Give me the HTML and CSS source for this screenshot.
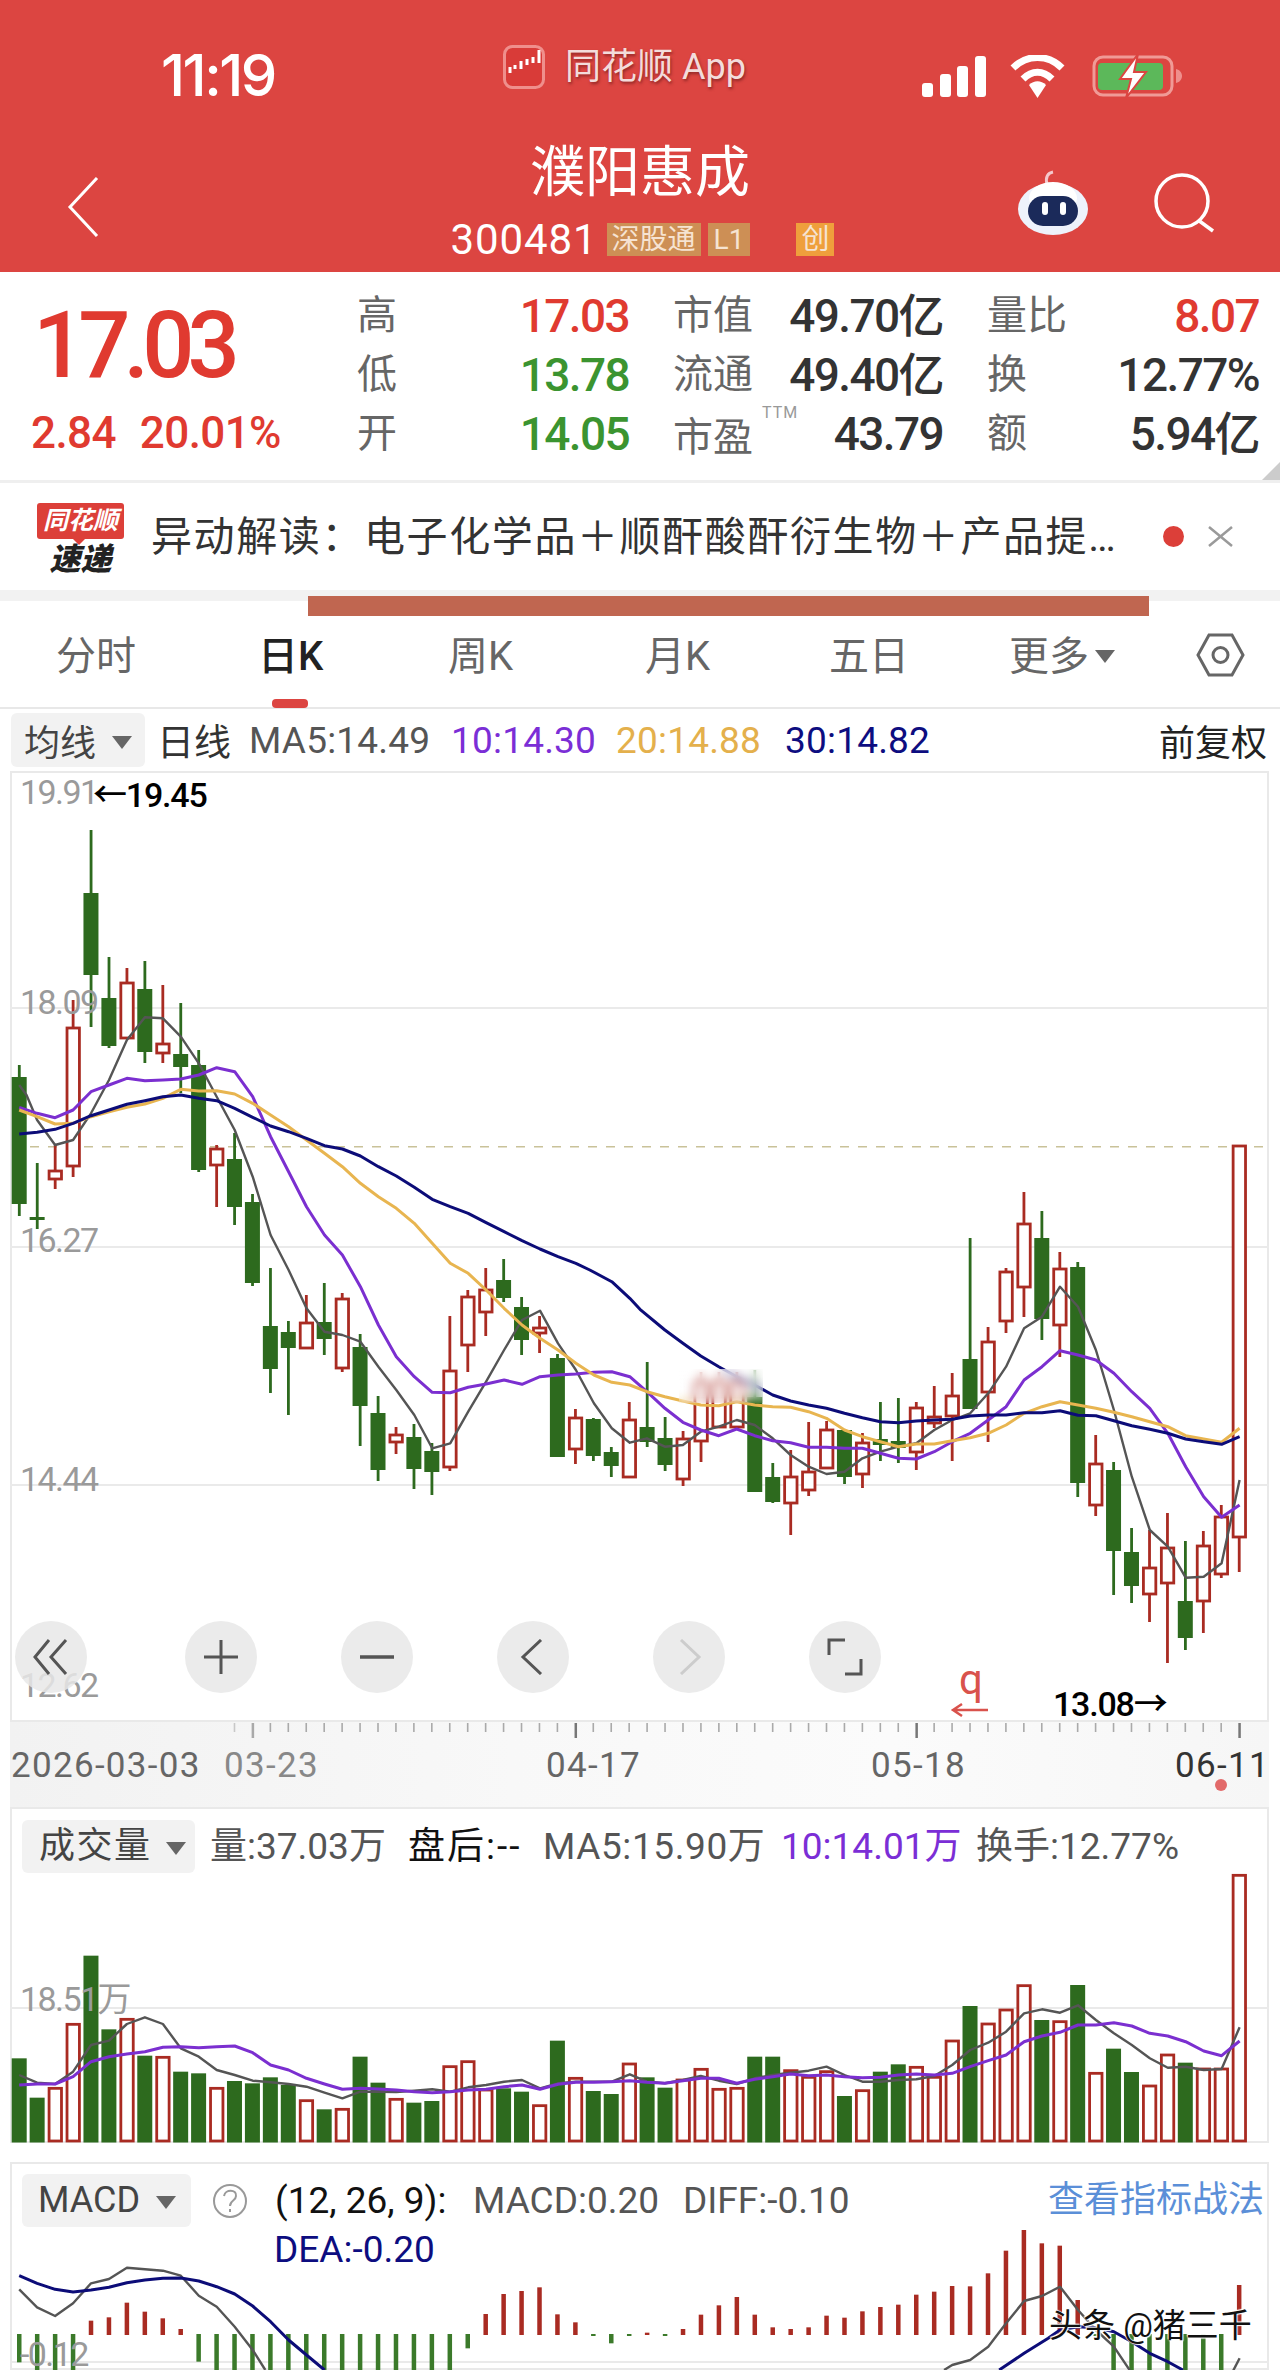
FILE: index.html
```html
<!DOCTYPE html>
<html lang="zh-CN">
<head>
  <meta charset="UTF-8" />
  <title>濮阳惠成 300481</title>
  <link rel="stylesheet" href="styles.css">
</head>
<body>
  <div class="phone">
    <header class="topbar">
      <div class="status">
        <span class="clock">11:19</span>
        <div class="carrier">
          <svg class="app-icon" viewBox="0 0 42 44">
            <rect x="1.5" y="1.5" width="39" height="41" rx="8" fill="#d93b38" stroke="#ef8f8c" stroke-width="3"/>
            <path d="M7 22v6M12 20v4M18 16v8M24 14v6M30 12v6M36 5v13" stroke="#fff" stroke-width="3" fill="none"/>
          </svg>
          <span>同花顺 App</span>
        </div>
        <div class="status-icons">
          <svg width="64" height="41" viewBox="0 0 64 41">
            <rect x="0" y="27" width="11" height="14" rx="3" fill="#fff"/>
            <rect x="18" y="18" width="11" height="23" rx="3" fill="#fff"/>
            <rect x="35" y="10" width="11" height="31" rx="3" fill="#fff"/>
            <rect x="53" y="0" width="11" height="41" rx="3" fill="#fff"/>
          </svg>
          <svg width="55" height="43" viewBox="0 0 55 43">
            <path d="M3 13C17 -1 38 -1 52 13" stroke="#fff" stroke-width="7" fill="none"/>
            <path d="M13 24C22 15 33 15 42 24" stroke="#fff" stroke-width="7" fill="none"/>
            <path d="M19 30C24 25 31 25 36 30L27.5 43Z" fill="#fff"/>
          </svg>
          <svg width="90" height="44" viewBox="0 0 90 44">
            <rect x="2" y="3" width="78" height="38" rx="9" fill="none" stroke="#f09a96" stroke-width="3"/>
            <rect x="6" y="9" width="65" height="27" rx="4" fill="#5cb85a"/>
            <path d="M84 15c4 1 6 4 6 7s-2 6-6 7z" fill="#ef8f8c"/>
            <path d="M46 0L28 25H39L34 44L54 18H42Z" fill="#fff" stroke="#dc4541" stroke-width="2"/>
          </svg>
        </div>
      </div>
      <div class="nav">
        <svg class="back" width="34" height="60" viewBox="0 0 34 60"><path d="M31 1L4 30L31 59" fill="none" stroke="#fff" stroke-width="3"/></svg>
        <div class="stock-title">
          <h1>濮阳惠成</h1>
          <div class="stock-code">
            <span class="code">300481</span>
            <span class="tag tag-first">深股通</span>
            <span class="tag">L1</span>
            <span class="tag tag-chuang">创</span>
          </div>
        </div>
        <div class="nav-actions">
          <svg class="robot" width="72" height="66" viewBox="0 0 72 66">
            <path d="M30 14C28 7 31 3 36 2" fill="none" stroke="#f4c8cc" stroke-width="3"/>
            <ellipse cx="36" cy="39" rx="35" ry="26" fill="#eef2fb"/>
            <ellipse cx="36" cy="28" rx="24" ry="16" fill="#fff"/>
            <rect x="11" y="26" width="50" height="30" rx="15" fill="#1b2a5a"/>
            <rect x="25" y="32" width="6" height="13" rx="3" fill="#fff"/>
            <rect x="43" y="32" width="6" height="13" rx="3" fill="#fff"/>
          </svg>
          <svg width="62" height="60" viewBox="0 0 62 60">
            <circle cx="29" cy="28" r="26" fill="none" stroke="#fff" stroke-width="3.5"/>
            <path d="M45 47L60 58" stroke="#fff" stroke-width="3.5"/>
          </svg>
        </div>
      </div>
    </header>

    <section class="quote">
      <div class="price">
        <div class="last">17.03</div>
        <div class="change"><span>2.84</span><span>20.01%</span></div>
      </div>
      <div class="stats">
        <div class="stat"><span class="k">高</span><span class="v up">17.03</span></div>
        <div class="stat"><span class="k">市值</span><span class="v">49.70亿</span></div>
        <div class="stat"><span class="k">量比</span><span class="v up">8.07</span></div>
        <div class="stat"><span class="k">低</span><span class="v down">13.78</span></div>
        <div class="stat"><span class="k">流通</span><span class="v">49.40亿</span></div>
        <div class="stat"><span class="k">换</span><span class="v">12.77%</span></div>
        <div class="stat"><span class="k">开</span><span class="v down">14.05</span></div>
        <div class="stat"><span class="k k-low">市盈<sup class="ttm">TTM</sup></span><span class="v">43.79</span></div>
        <div class="stat"><span class="k">额</span><span class="v">5.94亿</span></div>
      </div>
      <div class="corner"></div>
    </section>

    <section class="news">
      <div class="news-logo">
        <div class="bubble">同花顺</div>
        <div class="express">速递</div>
      </div>
      <p class="news-text">异动解读：电子化学品＋顺酐酸酐衍生物＋产品提…</p>
      <span class="news-dot"></span>
      <svg width="25" height="21" viewBox="0 0 25 21"><path d="M1 1L24 20M24 1L1 20" stroke="#9a9a9a" stroke-width="2.5"/></svg>
    </section>

    <div class="band"><div class="redact"></div></div>

    <nav class="tabs">
      <span class="tab tab-1">分时</span>
      <span class="tab tab-active">日K</span>
      <span class="tab tab-3">周K</span>
      <span class="tab tab-4">月K</span>
      <span class="tab tab-5">五日</span>
      <span class="tab tab-6">更多<i class="caret"></i></span>
      <svg class="hex" width="49" height="44" viewBox="0 0 49 44">
        <path d="M13 2H36L47 22L36 42H13L2 22Z" fill="none" stroke="#666" stroke-width="3"/>
        <circle cx="24.5" cy="22" r="7.5" fill="none" stroke="#666" stroke-width="3"/>
      </svg>
    </nav>

    <div class="ma-row">
      <span class="pill pill-ma">均线<i class="caret"></i></span>
      <span class="ma-day">日线</span>
      <span class="gray ma5">MA5:14.49</span>
      <span class="violet ma10">10:14.30</span>
      <span class="amber ma20">20:14.88</span>
      <span class="navy ma30">30:14.82</span>
      <span class="adjust">前复权</span>
    </div>

    <section class="panel kline">
      <svg id="klineChart" class="chart" viewBox="10 771 1259 951"></svg>
      <div class="smear"></div>
      <span class="axis a1">19.91</span>
      <span class="axis a2">18.09</span>
      <span class="axis a3">16.27</span>
      <span class="axis a4">14.44</span>
      <span class="axis a5">12.62</span>
      <span class="mark mark-high">←19.45</span>
      <span class="mark mark-low">13.08→</span>
      <span class="q-mark">q</span>
      <div class="zoom-btns">
        <span class="zbtn"><svg width="36" height="36" viewBox="0 0 36 36"><path d="M16 1L2 18L16 35M33 1L18 18L33 35" fill="none" stroke="#555" stroke-width="3"/></svg></span>
        <span class="zbtn"><svg width="36" height="36" viewBox="0 0 36 36"><path d="M18 1V35M1 18H35" stroke="#555" stroke-width="3"/></svg></span>
        <span class="zbtn"><svg width="36" height="36" viewBox="0 0 36 36"><path d="M1 18H35" stroke="#555" stroke-width="3.5"/></svg></span>
        <span class="zbtn"><svg width="36" height="36" viewBox="0 0 36 36"><path d="M26 1L8 18L26 35" fill="none" stroke="#555" stroke-width="3"/></svg></span>
        <span class="zbtn"><svg width="36" height="36" viewBox="0 0 36 36"><path d="M10 1L28 18L10 35" fill="none" stroke="#ccc" stroke-width="3"/></svg></span>
        <span class="zbtn"><svg width="36" height="38" viewBox="0 0 36 38"><path d="M2 17V2H18M34 21V36H18" fill="none" stroke="#555" stroke-width="3"/></svg></span>
      </div>
    </section>

    <section class="time-axis">
      <svg id="timeTicks" class="chart" viewBox="0 1722 1280 85"></svg>
      <span class="date d1">2026-03-03</span>
      <span class="date d2">03-23</span>
      <span class="date d3">04-17</span>
      <span class="date d4">05-18</span>
      <span class="date d5">06-11</span>
      <span class="time-dot"></span>
    </section>

    <section class="panel vol">
      <svg id="volChart" class="chart" viewBox="10 1807 1259 336"></svg>
      <div class="info-row">
        <span class="pill pill-vol">成交量<i class="caret"></i></span>
        <span class="gray v1">量:37.03万</span>
        <span class="dark v2">盘后:--</span>
        <span class="gray v3">MA5:15.90万</span>
        <span class="violet v4">10:14.01万</span>
        <span class="gray v5">换手:12.77%</span>
      </div>
      <span class="axis a-vol">18.51万</span>
    </section>

    <section class="panel macd">
      <svg id="macdChart" class="chart" viewBox="10 2162 1259 208"></svg>
      <div class="info-row">
        <span class="pill pill-macd">MACD<i class="caret"></i></span>
        <svg class="help" width="36" height="36" viewBox="0 0 36 36">
          <circle cx="18" cy="18" r="16" fill="none" stroke="#999" stroke-width="2"/>
          <path d="M12 13c1-7 13-7 12 0c0 5-6 4-6 10M18 26v3" fill="none" stroke="#999" stroke-width="2"/>
        </svg>
        <span class="dark m1">(12, 26, 9):</span>
        <span class="gray m2">MACD:0.20</span>
        <span class="gray m3">DIFF:-0.10</span>
        <span class="link">查看指标战法</span>
      </div>
      <div class="dea navy">DEA:-0.20</div>
      <span class="axis a-macd">-0.12</span>
      <span class="watermark">头条 @猪三千</span>
    </section>
  </div>
  <script src="chart.js"></script>
</body>
</html>
```

FILE: styles.css
```css
* {
  box-sizing: border-box;
}
body {
  margin: 0;
  background: #fff;
  font-family: Roboto, "Noto Sans CJK SC", sans-serif;
}
.phone {
  width: 1280px;
  height: 2370px;
  overflow: hidden;
}

/* red header */
.topbar {
  height: 272px;
  background: #dc4541;
  color: #fff;
}
.status {
  height: 110px;
  display: flex;
  align-items: flex-start;
  padding: 45px 0 0 161px;
}
.clock {
  width: 122px;
  font: 500 58px/60px Inter, sans-serif;
  letter-spacing: -2.5px;
  white-space: nowrap;
}
.carrier {
  width: 248px;
  margin-left: 220px;
  display: flex;
  gap: 20px;
  color: #f3dcdb;
  font-size: 36px;
  line-height: 44px;
  white-space: nowrap;
  text-shadow: 1px 2px 3px rgba(90, 20, 20, .6);
}
.app-icon {
  width: 42px;
  height: 44px;
  flex-shrink: 0;
}
.status-icons {
  margin-left: 171px;
  display: flex;
  align-items: center;
  gap: 24px;
  margin-top: 9px;
}
.status-icons svg + svg + svg {
  margin-left: 3px;
}
.nav {
  display: grid;
  grid-template-columns: 1fr auto 1fr;
  height: 162px;
}
.back {
  margin: 67px 0 0 66px;
}
.stock-title {
  text-align: center;
}
.stock-title h1 {
  margin: 30px 0 0;
  font-size: 55px;
  line-height: 64px;
  font-weight: 400;
}
.stock-code {
  display: flex;
  align-items: center;
  margin: 18px 0 0 5px;
  height: 34px;
}
.code {
  font-size: 42px;
  letter-spacing: .9px;
}
.tag {
  margin-left: 7px;
  height: 33px;
  padding: 0 6px;
  background: #cd8f55;
  color: #f6e3d2;
  font-size: 28px;
  line-height: 33px;
}
.tag-first {
  margin-left: 9px;
  padding: 0 5px;
}
.tag-chuang {
  margin-left: 46px;
  background: #ef9f3c;
  padding: 0 5px;
}
.nav-actions {
  display: flex;
  justify-content: flex-end;
  align-items: center;
  gap: 64px;
  padding: 0 65px 0 0;
  margin-top: 28px;
  height: 130px;
}

/* quote block */
.quote {
  position: relative;
  height: 208px;
  display: flex;
}
.price {
  width: 357px;
  color: #e03a30;
  padding: 24px 0 0 31px;
}
.last {
  font-size: 92px;
  line-height: 100px;
  letter-spacing: -7px;
  font-weight: 500;
  margin-left: 2px;
}
.change {
  display: flex;
  gap: 24px;
  margin-top: 13px;
  font-size: 44px;
  line-height: 48px;
  letter-spacing: -.6px;
  font-weight: 500;
}
.stats {
  display: grid;
  grid-template-columns: 272px 270px 272px;
  column-gap: 44px;
  grid-auto-rows: 59px;
  padding-top: 14px;
}
.stat {
  display: flex;
  justify-content: space-between;
  align-items: center;
}
.k {
  color: #666;
  font-size: 40px;
  line-height: 52px;
}
.k-low {
  padding-top: 8px;
  position: relative;
}
.ttm {
  position: absolute;
  left: 89px;
  top: 0;
  font-size: 16px;
  line-height: 18px;
  letter-spacing: 1px;
  color: #999;
}
.v {
  color: #333;
  font-size: 46px;
  line-height: 52px;
  font-weight: 500;
  letter-spacing: -1.6px;
}
.up {
  color: #e03a30;
}
.down {
  color: #3b9430;
}
.corner {
  position: absolute;
  right: 0;
  bottom: 0;
  border-left: 18px solid transparent;
  border-bottom: 18px solid #ccc;
}

/* news strip */
.news {
  height: 110px;
  border-top: 3px solid #efefef;
  display: flex;
  align-items: center;
  padding-left: 37px;
}
.news-logo {
  width: 87px;
  height: 71px;
  margin-top: 3px;
}
.bubble {
  position: relative;
  height: 36px;
  background: #dc3f39;
  border-radius: 3px;
  color: #fff;
  font-size: 25px;
  line-height: 36px;
  font-weight: 700;
  font-style: italic;
  text-align: center;
}
.bubble::after {
  content: "";
  position: absolute;
  left: 36px;
  bottom: -6px;
  border: 6px solid transparent;
  border-bottom: 0;
  border-top-color: #dc3f39;
}
.express {
  margin-top: 6px;
  color: #222;
  font-size: 31px;
  line-height: 30px;
  font-weight: 900;
  font-style: italic;
  text-align: center;
}
.news-text {
  width: 1012px;
  margin: 0 0 0 27px;
  color: #333;
  font-size: 41px;
  letter-spacing: 1.6px;
  line-height: 50px;
  white-space: nowrap;
}
.news-dot {
  width: 21px;
  height: 21px;
  border-radius: 50%;
  background: #dc3f39;
  margin-right: 24px;
}

.band {
  position: relative;
  height: 11px;
  background: #f2f2f2;
}
.redact {
  position: absolute;
  left: 308px;
  top: 6px;
  width: 841px;
  height: 20px;
  background: #c06650;
}

/* period tabs */
.tabs {
  position: relative;
  height: 108px;
  border-bottom: 2px solid #e8e8e8;
  color: #666;
  font-size: 40px;
}
.tab {
  position: absolute;
  top: 33px;
  line-height: 46px;
}
.tab-1 { left: 56px; }
.tab-active { left: 258px; color: #222; font-weight: 500; }
.tab-active::after {
  content: "";
  position: absolute;
  left: 14px;
  top: 65px;
  width: 36px;
  height: 9px;
  border-radius: 4px;
  background: #dc4541;
}
.tab-3 { left: 448px; }
.tab-4 { left: 645px; }
.tab-5 { left: 829px; }
.tab-6 { left: 1009px; }
.hex {
  position: absolute;
  left: 1196px;
  top: 32px;
}
.caret {
  display: inline-block;
  border: 10px solid transparent;
  border-bottom: 0;
  border-top: 13px solid #666;
  margin-left: 6px;
  vertical-align: 7px;
}

/* MA legend */
.ma-row {
  position: relative;
  height: 62px;
  font-size: 37px;
  display: flex;
  align-items: center;
}
.pill {
  background: #f2f2f2;
  border-radius: 6px;
  color: #444;
  display: flex;
  align-items: center;
  font-size: 36px;
}
.pill-ma {
  width: 134px;
  height: 54px;
  margin-left: 11px;
  padding-left: 13px;
}
.pill-ma .caret,
.pill-vol .caret,
.pill-macd .caret {
  margin-left: 16px;
  margin-top: 4px;
  vertical-align: baseline;
}
.ma-day {
  margin-left: 12px;
  color: #333;
}
.ma5 { margin-left: 18px; width: 202px; letter-spacing: .2px; }
.ma10 { width: 165px; letter-spacing: .2px; }
.ma20 { width: 169px; letter-spacing: .2px; }
.ma30 { letter-spacing: .2px; }
.adjust {
  margin-left: auto;
  padding-right: 13px;
  color: #222;
  font-size: 36px;
}
.gray { color: #555; }
.dark { color: #111; }
.violet { color: #7b2ed6; }
.amber { color: #e4b04c; }
.navy { color: #0d0d80; }

/* chart panels */
.panel {
  position: relative;
  width: 1259px;
  margin-left: 10px;
  box-shadow: inset 0 0 0 2px #e9e9e9;
}
.chart {
  position: absolute;
  left: 0;
  top: 0;
  width: 100%;
  height: 100%;
}
.kline {
  height: 951px;
}
.axis {
  position: absolute;
  left: 10px;
  color: #9a9a9a;
  font-size: 34px;
  line-height: 34px;
  letter-spacing: -1.6px;
}
.a1 { top: 4px; }
.a2 { top: 214px; }
.a3 { top: 452px; }
.a4 { top: 691px; }
.a5 { top: 897px; }
.mark {
  position: absolute;
  color: #000;
  font-size: 34px;
  line-height: 34px;
  font-weight: 500;
  letter-spacing: -1.2px;
}
.mark-high { left: 83px; top: 7px; }
.mark-low { left: 1043px; top: 916px; }
.q-mark {
  position: absolute;
  left: 949px;
  top: 888px;
  color: #d9524c;
  font-size: 42px;
  line-height: 42px;
}
.smear {
  position: absolute;
  left: 669px;
  top: 598px;
  width: 84px;
  height: 34px;
  backdrop-filter: blur(5px);
  background: linear-gradient(rgba(255, 255, 255, .55), rgba(255, 255, 255, .05));
}
.zoom-btns {
  position: absolute;
  left: 5px;
  top: 850px;
  display: flex;
  gap: 84px;
}
.zbtn {
  width: 72px;
  height: 72px;
  border-radius: 50%;
  background: rgba(232, 232, 232, .85);
  display: flex;
  align-items: center;
  justify-content: center;
}
.zbtn:first-child {
  margin-right: 14px;
}

/* time axis */
.time-axis {
  position: relative;
  height: 85px;
  margin-left: 10px;
  width: 1259px;
  background: linear-gradient(90deg, #f2f2f2, #f8f8f8 40%, #fbfbfb 70%, #f6f6f6);
}
.time-axis .chart {
  left: -10px;
  width: 1280px;
}
.date {
  position: absolute;
  top: 26px;
  color: #666;
  font-size: 35px;
  line-height: 36px;
  letter-spacing: 1.3px;
  white-space: nowrap;
}
.d1 { left: 1px; }
.d2 { left: 214px; color: #888; }
.d3 { left: 536px; }
.d4 { left: 861px; }
.d5 { left: 1165px; color: #333; }
.time-dot {
  position: absolute;
  left: 1205px;
  top: 57px;
  width: 12px;
  height: 12px;
  border-radius: 50%;
  background: #e26a6a;
}

.vol {
  height: 336px;
}
.info-row {
  position: relative;
  display: flex;
  align-items: center;
  font-size: 37px;
  line-height: 53px;
  padding: 13px 0 0 12px;
  white-space: nowrap;
}
.pill-vol {
  width: 173px;
  height: 53px;
  padding-left: 17px;
  letter-spacing: 1.5px;
}
.pill-vol .caret { margin-left: 14px; }
.v1 { margin-left: 15px; width: 198px; }
.v2 { width: 135px; letter-spacing: 2px; }
.v3 { width: 238px; letter-spacing: .6px; }
.v4 { width: 195px; }
.a-vol {
  top: 175px;
}

.macd {
  height: 208px;
  margin-top: 19px;
  overflow: hidden;
}
.macd .info-row {
  padding-top: 12px;
}
.pill-macd {
  width: 169px;
  height: 53px;
  padding-left: 16px;
}
.help { margin-left: 21px; }
.m1 { margin-left: 27px; width: 198px; }
.m2 { width: 210px; }
.link {
  margin-left: auto;
  padding-right: 5px;
  font-size: 36px;
  color: #5b8fd8;
}
.dea {
  position: absolute;
  left: 264px;
  top: 67px;
  font-size: 37px;
  line-height: 42px;
}
.a-macd {
  top: 180px;
  line-height: 24px;
}
.watermark {
  position: absolute;
  left: 1039px;
  top: 142px;
  color: #111;
  font-size: 33px;
  line-height: 44px;
  white-space: nowrap;
  text-shadow: 0 0 2px #fff, 1px 1px 1px #fff, -1px -1px 1px #fff;
}
```

FILE: chart.js
```js
// candles: [wick top, body top, body bottom, wick bottom, r/g], y in page px
const candles = [
  [1065,1077,1204,1216,"g"],[1163,1217,1220,1229,"g"],[1145,1171,1179,1189,"r"],[1000,1028,1166,1177,"r"],
  [830,893,975,1027,"g"],[957,998,1046,1048,"g"],[968,983,1038,1038,"r"],[961,989,1052,1063,"g"],
  [985,1044,1053,1063,"r"],[1003,1054,1067,1093,"g"],[1050,1065,1170,1172,"g"],[1145,1149,1165,1207,"r"],
  [1133,1159,1207,1225,"g"],[1194,1202,1283,1286,"g"],[1268,1326,1369,1393,"g"],[1321,1332,1348,1415,"g"],
  [1295,1323,1348,1348,"r"],[1283,1322,1339,1355,"g"],[1293,1299,1368,1372,"r"],[1334,1347,1406,1446,"g"],
  [1396,1413,1470,1481,"g"],[1427,1435,1442,1454,"r"],[1424,1437,1469,1489,"g"],[1443,1451,1472,1495,"g"],
  [1316,1371,1467,1471,"r"],[1290,1297,1345,1372,"r"],[1268,1290,1312,1336,"r"],[1259,1280,1298,1302,"g"],
  [1297,1307,1340,1355,"g"],[1316,1328,1333,1353,"r"],[1354,1358,1457,1457,"g"],[1409,1418,1449,1464,"r"],
  [1418,1419,1456,1461,"g"],[1447,1452,1466,1477,"g"],[1402,1420,1477,1477,"r"],[1362,1427,1442,1447,"g"],
  [1417,1438,1465,1471,"g"],[1431,1439,1479,1486,"r"],[1372,1382,1441,1462,"r"],[1372,1382,1427,1427,"r"],
  [1372,1382,1427,1427,"r"],[1370,1397,1492,1492,"g"],[1463,1477,1502,1503,"g"],[1450,1477,1503,1535,"r"],
  [1422,1472,1490,1496,"r"],[1421,1430,1468,1468,"r"],[1429,1430,1477,1484,"g"],[1433,1443,1474,1488,"r"],
  [1402,1439,1445,1461,"g"],[1398,1441,1448,1463,"g"],[1402,1408,1452,1470,"r"],[1386,1417,1423,1428,"r"],
  [1373,1396,1416,1461,"r"],[1238,1359,1409,1409,"g"],[1327,1342,1392,1442,"r"],[1268,1272,1321,1333,"r"],
  [1192,1224,1287,1317,"r"],[1211,1238,1319,1340,"g"],[1252,1269,1325,1357,"r"],[1262,1267,1483,1497,"g"],
  [1435,1464,1505,1516,"r"],[1462,1470,1551,1595,"g"],[1528,1552,1586,1603,"g"],[1530,1568,1594,1622,"r"],
  [1513,1548,1583,1663,"r"],[1541,1601,1638,1650,"g"],[1531,1546,1601,1633,"r"],[1505,1517,1574,1578,"r"],
  [1146,1146,1537,1572,"r"]
];

// volume bar tops: [zoomed y, zoomed y...] read off the reference, y = 1770 + v / 3
const volTops = [865,983,955,763,557,778,748,857,862,905,910,955,933,940,922,945,992,1018,1018,860,
  938,988,998,993,890,875,960,955,965,1007,812,925,963,972,882,922,953,930,898,958,955,860,860,902,
  922,905,978,962,905,883,892,922,813,708,762,720,647,750,755,645,910,836,906,948,855,878,897,897,316];

// macd bar tops: y = 2150 + v / 3, 555 is the zero line, larger means green going down
const macdVals = [637,660,660,660,512,502,458,485,505,537,635,660,660,660,660,660,660,660,660,660,
  660,660,660,660,660,595,492,432,423,412,493,517,558,580,558,548,558,537,494,466,441,494,532,537,
  532,497,503,484,471,464,434,425,408,409,370,302,240,280,287,450,558,660,660,660,660,660,660,660,405];

const GREEN = "#2d6a1e", RED = "#a92b22", NS = "http://www.w3.org/2000/svg";
const barX = i => 19.2 + 17.94 * i;

function el(svg, name, attrs) {
  const n = document.createElementNS(NS, name);
  for (const k in attrs) n.setAttribute(k, attrs[k]);
  svg.appendChild(n);
}

// each segment: [x offset, y offset, zoomed points]; zoom crops are 2.45x wide, 3x tall
function line(svg, color, width, segments) {
  const pts = [];
  segments.forEach(([ox, oy, flat]) => {
    for (let i = 0; i < flat.length; i += 2) {
      pts.push((ox + flat[i] / 2.45).toFixed(1) + "," + (oy + flat[i + 1] / 3).toFixed(1));
    }
  });
  el(svg, "polyline", { points: pts.join(" "), fill: "none", stroke: color, "stroke-width": width, "stroke-linejoin": "round" });
}

function hline(svg, y) {
  el(svg, "rect", { x: 10, y: y - 1, width: 1259, height: 2, fill: "#eaeaea" });
}

// main k-line chart
const k = document.getElementById("klineChart");
[1008, 1247, 1485].forEach(y => hline(k, y));
el(k, "line", { x1: 12, x2: 1268, y1: 1146.7, y2: 1146.7, stroke: "#c9c299", "stroke-width": 1.5, "stroke-dasharray": "9 9" });
candles.forEach(([wt, bt, bb, wb, c], i) => {
  const x = barX(i);
  const color = c === "g" ? GREEN : RED;
  if (wt < bt) el(k, "rect", { x: x - 1.3, y: wt, width: 2.8, height: bt - wt, fill: color });
  if (wb > bb) el(k, "rect", { x: x - 1.3, y: bb, width: 2.8, height: wb - bb, fill: color });
  if (c === "g") el(k, "rect", { x: x - 7.5, y: bt, width: 15, height: bb - bt, fill: color });
  else el(k, "rect", { x: x - 6, y: bt, width: 12.4, height: bb - bt, fill: "#fff", stroke: color, "stroke-width": 2.8 });
});

line(k, "#555", 2.4, [
  [0, 770, [47,945,65,975,91,1050,135,1125,179,1110,223,1030,267,930,311,810,355,742,399,745,443,800,487,880,531,980,575,1080,619,1220,663,1395]],
  [0, 1270, [707,0,751,115,795,185,839,195,883,215,927,290,971,360,1015,435,1059,535,1103,520,1147,425,1191,335,1235,240,1279,150,1323,122,1367,220,1411,300,1455,400,1499,475,1543,518]],
  [640, 1270, [17,505,61,530,105,525,149,485,193,470,237,450,281,465,325,505,369,555,413,590,457,612,501,605,545,565,589,545,633,530,677,520,721,480,765,450,809,430,853,370,897,290,941,175,985,140,1029,50,1073,110,1117,240,1161,420,1205,620,1249,780,1293,830,1337,923,1381,920,1425,880,1469,630]]
]);
line(k, "#7b2fd0", 3, [
  [0, 770, [47,1012,91,1030,135,1043,179,1020,223,965,267,945,311,925,355,932,399,930,443,927,487,915,531,893,575,905,619,980,663,1100,707,1205,751,1310,795,1395,839,1455]],
  [0, 1270, [883,50,927,165,971,260,1015,320,1059,367,1103,368,1147,352,1191,342,1235,330,1279,343,1323,320,1367,315,1411,312,1455,307,1499,305,1543,320]],
  [640, 1270, [17,365,61,415,105,457,149,480,193,497,237,477,281,497,325,512,369,518,413,532,457,532,501,535,545,535,589,550,633,565,677,567,721,545,765,515,809,490,853,450,897,410,941,330,985,290,1029,242,1073,255,1117,270,1161,310,1205,365,1249,415,1293,490,1337,590,1381,680,1425,742,1469,705]]
]);
line(k, "#e8b550", 3, [
  [0, 770, [47,1020,91,1040,135,1062,179,1060,223,1040,267,1025,311,1012,355,1002,399,985,443,958,487,963,531,962,575,972,619,1000,663,1035,707,1070,751,1110,795,1150,839,1190,883,1240,927,1280,971,1315,1015,1360,1059,1420,1103,1480]],
  [0, 1270, [1147,10,1191,60,1235,115,1279,165,1323,205,1367,240,1411,280,1455,315,1499,337,1543,345]],
  [640, 1270, [17,365,61,380,105,393,149,405,193,407,237,395,281,405,325,410,369,412,413,425,457,445,501,480,545,500,589,515,633,530,677,522,721,522,765,512,809,503,853,490,897,465,941,430,985,410,1029,395,1073,405,1117,415,1161,427,1205,440,1249,455,1293,470,1337,497,1381,507,1425,517,1469,475]]
]);
line(k, "#0c0c78", 3, [
  [0, 770, [47,1092,91,1087,135,1078,179,1060,223,1037,267,1020,311,1003,355,992,399,980,443,975,487,985,531,992,575,1015,619,1042,663,1068,707,1085,751,1105,795,1127,839,1137,883,1158,927,1190,971,1218,1015,1252,1059,1288,1103,1310,1147,1330,1191,1358,1235,1385,1279,1412,1323,1437,1367,1460,1411,1480]],
  [0, 1270, [1445,0,1499,35,1543,85]],
  [640, 1270, [0,118,61,180,105,220,149,258,193,290,237,320,281,345,325,375,369,393,413,405,457,415,501,430,545,443,589,455,633,458,677,453,721,450,765,448,809,438,853,435,897,435,941,428,985,428,1029,422,1073,436,1117,437,1161,452,1205,467,1249,478,1293,490,1337,507,1381,515,1425,523,1469,500]]
]);
// small red arrow beside the q mark
el(k, "path", { d: "M988 1710H954M962 1704L953 1710L962 1716", fill: "none", stroke: "#d9524c", "stroke-width": 2.5 });

// time axis ticks
const t = document.getElementById("timeTicks");
candles.forEach((c, i) => {
  if (i < 12) return;
  const long = [13, 31, 50, 68].includes(i);
  el(t, "rect", { x: barX(i) - 0.8, y: 1723, width: long ? 2.5 : 1.6, height: long ? 15 : 9, fill: long ? "#777" : "#aaa", opacity: i < 14 ? .6 : 1 });
});

// volume chart
const v = document.getElementById("volChart");
hline(v, 2008);
volTops.forEach((top, i) => {
  const y = 1770 + top / 3, x = barX(i);
  if (candles[i][4] === "g") el(v, "rect", { x: x - 7.5, y: y, width: 15, height: 2142.5 - y, fill: GREEN });
  else el(v, "rect", { x: x - 6, y: y, width: 12.4, height: 2141 - y, fill: "#fff", stroke: RED, "stroke-width": 2.8 });
});
line(v, "#555", 2.4, [
  [0, 1770, [47,915,91,938,135,942,179,905,223,825,267,812,311,762,355,742,399,762,443,835,487,860,531,900,575,915,619,932,663,937,707,942,751,950,795,968,839,985,883,965,927,965,971,966,1015,962,1059,958,1103,965,1147,952,1191,945,1235,935,1279,930,1323,955,1367,940,1411,935,1455,935,1499,935,1543,913]],
  [640, 1770, [17,935,61,940,105,930,149,918,193,932,237,942,281,925,325,915,369,908,413,902,457,890,501,915,545,935,589,935,633,930,677,928,721,918,765,885,809,840,853,818,897,785,941,730,985,718,1029,728,1073,706,1117,750,1161,790,1205,825,1249,865,1293,893,1337,890,1381,900,1425,897,1469,772]]
]);
line(v, "#7b2fd0", 3, [
  [0, 1770, [47,945,91,942,135,942,179,920,223,875,267,860,311,852,355,845,399,832,443,830,487,833,531,830,575,828,619,848,663,885,707,900,751,925,795,942,839,958,883,955,927,957,971,960,1015,965,1059,968,1103,965,1147,960,1191,958,1235,950,1279,945,1323,958,1367,943,1411,937,1455,937,1499,935,1543,932]],
  [640, 1770, [17,937,61,940,105,932,149,925,193,925,237,940,281,928,325,920,369,912,413,917,457,915,501,920,545,923,589,922,633,915,677,912,721,915,765,910,809,890,853,872,897,855,941,815,985,798,1029,787,1073,765,1117,765,1161,758,1205,768,1249,790,1293,798,1337,815,1381,843,1425,857,1469,813]]
]);

// macd chart
const m = document.getElementById("macdChart");
hline(m, 2362);
macdVals.forEach((val, i) => {
  const x = barX(i), zero = 2150 + 555 / 3, y = 2150 + val / 3;
  if (val < 555) el(m, "rect", { x: x - 2.2, y: y, width: 4.5, height: zero - y, fill: "#a92b22" });
  else el(m, "rect", { x: x - 2.2, y: zero - 1, width: 4.5, height: y - zero + 1, fill: "#3b7a2a" });
});
line(m, "#555", 2.4, [
  [0, 2150, [47,418,91,472,135,498,179,460,223,400,267,387,311,353,355,358,399,362,443,377,487,437,531,470,575,530,619,600,650,660]]
]);
line(m, "#555", 2.4, [
  [640, 2150, [745,660,765,645,809,630,853,590,897,520,941,453,985,438,1029,410,1073,480,1117,540,1161,590,1205,670]]
]);
line(m, "#555", 2.4, [[640, 2150, [1450,670,1469,625]]]);
line(m, "#0c0c78", 3, [
  [0, 2150, [47,377,91,400,135,418,179,426,223,420,267,412,311,398,355,390,399,385,443,384,487,393,531,410,575,432,619,468,663,515,707,570,751,615,795,660]]
]);
line(m, "#0c0c78", 3, [
  [640, 2150, [880,660,941,610,1000,565,1029,540,1073,530,1117,533,1161,545,1205,575,1249,610,1293,635,1330,660]]
]);
```
